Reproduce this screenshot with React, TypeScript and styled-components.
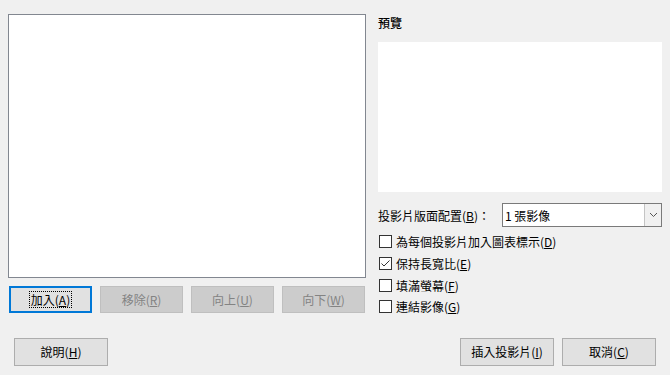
import React from "react";
import styled, { createGlobalStyle, css } from "styled-components";

const GlobalStyle = createGlobalStyle`
  html, body {
    margin: 0;
    padding: 0;
    background: #f0f0f0;
  }
  body {
    font-family: "Noto Sans CJK TC", "Noto Sans", sans-serif;
    font-size: 12px;
    color: #000;
  }
`;

const Dialog = styled.div`
  width: 670px;
  height: 375px;
  box-sizing: border-box;
  padding: 14px 8px 0 8px;
  display: flex;
  flex-direction: column;
`;

const Main = styled.div`
  display: flex;
  gap: 12px;
`;

const LeftColumn = styled.div`
  width: 358px;
  display: flex;
  flex-direction: column;
  gap: 8px;
`;

const ListBox = styled.div`
  height: 264px;
  box-sizing: border-box;
  background: #fff;
  border: 1px solid #828790;
`;

const ButtonRow = styled.div`
  display: flex;
  gap: 8px;
  padding-left: 1px;
`;

const Button = styled.button<{ $primary?: boolean; $w?: number; $h?: number }>`
  width: ${({ $w }) => $w ?? 83}px;
  height: ${({ $h }) => $h ?? 27}px;
  box-sizing: border-box;
  font: inherit;
  font-size: 12px;
  color: #000;
  background: #e1e1e1;
  border: 1px solid #adadad;
  padding: 0;
  display: flex;
  align-items: center;
  justify-content: center;
  cursor: default;
  ${({ $primary }) =>
    $primary &&
    css`
      border: 2px solid #0078d7;
    `}
  &:disabled {
    background: #cccccc;
    border-color: #bfbfbf;
    color: #838383;
  }
`;

const Focus = styled.span`
  outline: 1px dotted #000;
  padding: 0 1px;
  line-height: 15px;
`;

const RightColumn = styled.div`
  width: 284px;
  display: flex;
  flex-direction: column;
`;

const SectionLabel = styled.div`
  height: 16px;
  line-height: 16px;
  margin-top: 1px;
  font-weight: 500;
`;

const Preview = styled.div`
  margin-top: 11px;
  height: 150px;
  background: #fff;
`;

const LayoutRow = styled.div`
  margin-top: 11px;
  display: flex;
  align-items: center;
  height: 24px;
`;

const LayoutLabel = styled.div`
  width: 124px;
`;

const Select = styled.div`
  flex: 1;
  height: 24px;
  box-sizing: border-box;
  background: #fff;
  border: 1px solid #7a7a7a;
  display: flex;
  align-items: center;
`;

const SelectValue = styled.div`
  flex: 1;
  padding-left: 2px;
`;

const SelectArrow = styled.div`
  width: 17px;
  height: 22px;
  box-sizing: border-box;
  background: #f0f0f0;
  border-left: 1px solid #c4c4c4;
  display: flex;
  align-items: center;
  justify-content: center;
`;

const Checks = styled.div`
  margin-top: 4px;
  display: flex;
  flex-direction: column;
`;

const CheckRow = styled.label`
  height: 21.7px;
  display: flex;
  align-items: center;
  gap: 4px;
  padding-left: 1px;
`;

const Box = styled.span`
  width: 13px;
  height: 13px;
  box-sizing: border-box;
  border: 1px solid #333;
  background: #fff;
  display: flex;
  align-items: center;
  justify-content: center;
`;

const Footer = styled.div`
  margin-top: 20px;
  padding: 0 6px;
  display: flex;
  align-items: center;
`;

const Spacer = styled.div`
  flex: 1;
`;

const FooterRight = styled.div`
  display: flex;
  gap: 8px;
`;

const Check = ({ checked, children }: { checked?: boolean; children: React.ReactNode }) => (
  <CheckRow>
    <Box>
      {checked && (
        <svg width="11" height="11" viewBox="0 0 11 11">
          <polyline points="1.5,5.5 4,8 9.5,2.5" fill="none" stroke="#333" strokeWidth="1" />
        </svg>
      )}
    </Box>
    <span>{children}</span>
  </CheckRow>
);

export default function App() {
  return (
    <>
      <GlobalStyle />
      <Dialog>
        <Main>
          <LeftColumn>
            <ListBox />
            <ButtonRow>
              <Button $primary>
                <Focus>
                  加入(<u>A</u>)
                </Focus>
              </Button>
              <Button disabled>
                移除(<u>R</u>)
              </Button>
              <Button disabled>
                向上(<u>U</u>)
              </Button>
              <Button disabled>
                向下(<u>W</u>)
              </Button>
            </ButtonRow>
          </LeftColumn>
          <RightColumn>
            <SectionLabel>預覽</SectionLabel>
            <Preview />
            <LayoutRow>
              <LayoutLabel>
                投影片版面配置(<u>B</u>)：
              </LayoutLabel>
              <Select>
                <SelectValue>1 張影像</SelectValue>
                <SelectArrow>
                  <svg width="9" height="6" viewBox="0 0 9 6">
                    <polyline points="1,1 4.5,4.5 8,1" fill="none" stroke="#555" strokeWidth="1" />
                  </svg>
                </SelectArrow>
              </Select>
            </LayoutRow>
            <Checks>
              <Check>
                為每個投影片加入圖表標示(<u>D</u>)
              </Check>
              <Check checked>
                保持長寬比(<u>E</u>)
              </Check>
              <Check>
                填滿螢幕(<u>F</u>)
              </Check>
              <Check>
                連結影像(<u>G</u>)
              </Check>
            </Checks>
          </RightColumn>
        </Main>
        <Footer>
          <Button $w={94} $h={28}>
            說明(<u>H</u>)
          </Button>
          <Spacer />
          <FooterRight>
            <Button $w={94} $h={28}>
              插入投影片(<u>I</u>)
            </Button>
            <Button $w={94} $h={28}>
              取消(<u>C</u>)
            </Button>
          </FooterRight>
        </Footer>
      </Dialog>
    </>
  );
}
